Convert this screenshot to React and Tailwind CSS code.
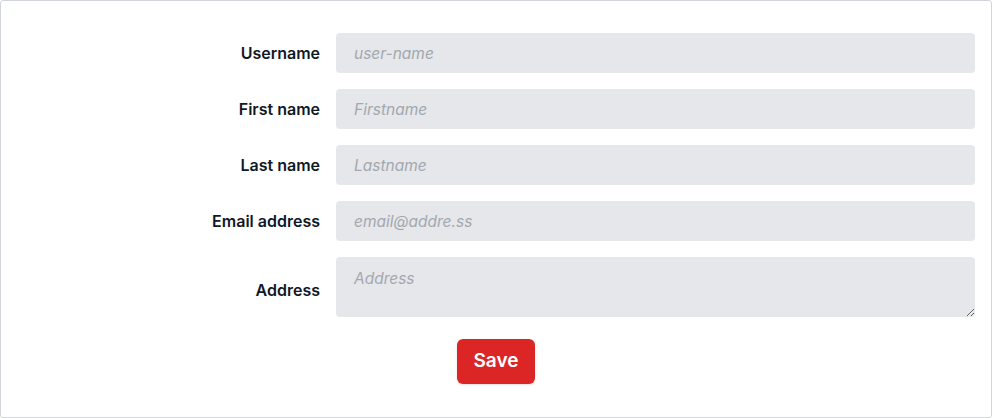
export default function App() {
  const fields = [
    { label: "Username", placeholder: "user-name" },
    { label: "First name", placeholder: "Firstname" },
    { label: "Last name", placeholder: "Lastname" },
    { label: "Email address", placeholder: "email@addre.ss" },
  ];

  return (
    <div
      className="w-[992px] h-[418px] bg-white border border-[#d1d5db] rounded-[3px] pt-8 pr-4"
      style={{ fontFamily: "Inter, 'Noto Sans', sans-serif" }}
    >
      <form className="flex flex-col gap-4" onSubmit={(e) => e.preventDefault()}>
        {fields.map((f) => (
          <div key={f.label} className="flex items-center gap-4">
            <label className="w-[319px] text-right text-[16px] leading-6 font-semibold text-[#111827]">
              {f.label}
            </label>
            <input
              type="text"
              placeholder={f.placeholder}
              className="flex-1 h-10 rounded-[4px] bg-[#e5e7eb] pl-[18px] pr-3 text-[15.5px] text-gray-900 placeholder:italic placeholder:text-[#a3a7ae] outline-none"
            />
          </div>
        ))}
        <div className="flex items-center gap-4">
          <label className="w-[319px] text-right text-[16px] leading-6 font-semibold text-[#111827] pt-[5px]">
            Address
          </label>
          <textarea
            placeholder="Address"
            className="flex-1 h-[60px] rounded-[4px] bg-[#e5e7eb] pl-[18px] pr-3 pt-[10px] text-[15.5px] text-gray-900 placeholder:italic placeholder:text-[#a3a7ae] outline-none"
          />
        </div>
        <div className="flex justify-center pl-4 mt-[6px]">
          <button
            type="submit"
            className="h-[45px] w-[78px] rounded-[6px] bg-[#dc2626] text-white text-[19px] font-semibold shadow-sm"
          >
            Save
          </button>
        </div>
      </form>
    </div>
  );
}
